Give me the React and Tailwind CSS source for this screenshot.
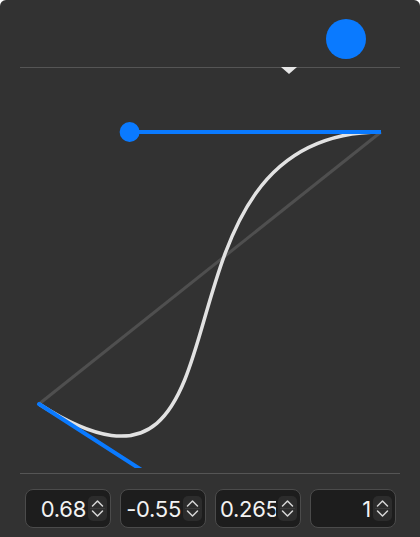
import React from 'react';

const values = ['0.68', '-0.55', '0.265', '1'];

const Stepper = () => (
    <div className="flex h-[25px] w-[19px] shrink-0 flex-col items-center justify-center rounded-[5px] bg-[#2c2c2c]">
        <svg width="19" height="25" viewBox="0 0 19 25" fill="none">
            <path d="M4.5 10 L9.5 5 L14.5 10" stroke="#d6d6d6" strokeWidth="1.5" strokeLinecap="round" strokeLinejoin="round" />
            <line x1="2" y1="12.5" x2="17" y2="12.5" stroke="#3a3a3a" strokeWidth="1" />
            <path d="M4.5 15 L9.5 20 L14.5 15" stroke="#d6d6d6" strokeWidth="1.5" strokeLinecap="round" strokeLinejoin="round" />
        </svg>
    </div>
);

const NumberField = ({ value }) => (
    <div className="flex h-[39px] w-[86px] items-center gap-[2px] rounded-[8px] border border-[#4b4b4b] bg-[#1d1d1d] pl-[4px] pr-[3px]">
        <div className="flex-1 overflow-hidden whitespace-nowrap text-right text-[22px] leading-[28px] tracking-[-0.3px] text-[#f2f2f2]">
            {value}
        </div>
        <Stepper />
    </div>
);

const App = () => {
    // cubic-bezier(0.68, -0.55, 0.265, 1) mapped onto the canvas
    const p0 = [39, 404];
    const p3 = [381, 132];
    const w = p3[0] - p0[0];
    const h = p0[1] - p3[1];
    const p1 = [p0[0] + 0.68 * w, p0[1] + 0.55 * h];
    const p2 = [p0[0] + 0.265 * w, p0[1] - 1 * h];

    return (
        <div className="flex h-[537px] w-[420px] flex-col overflow-hidden rounded-t-[6px] bg-[#323232]" style={{ fontFamily: 'Inter, "Liberation Sans", sans-serif' }}>
            {/* Preview dot */}
            <div className="flex h-[67px] justify-end pr-[54px] pt-[19px]">
                <div className="h-[40px] w-[40px] rounded-full bg-[#0a7aff]" />
            </div>

            {/* Timeline divider */}
            <div className="relative mx-5 h-px bg-[#555555]">
                <div className="absolute left-[261px] top-0 h-0 w-0 border-x-[8px] border-t-[7px] border-x-transparent border-t-[#e6e6e6]" />
            </div>

            {/* Curve editor */}
            <svg width="420" height="400" viewBox="0 68 420 400" className="block">
                <line x1={p0[0]} y1={p0[1]} x2={p3[0]} y2={p3[1]} stroke="#4f4f4f" strokeWidth="3" />
                <path
                    d={`M${p0[0]} ${p0[1]} C${p1[0]} ${p1[1]} ${p2[0]} ${p2[1]} ${p3[0]} ${p3[1]}`}
                    stroke="#e2e2e2"
                    strokeWidth="3.5"
                    fill="none"
                />
                <line x1={p0[0]} y1={p0[1]} x2={p1[0]} y2={p1[1]} stroke="#0a7aff" strokeWidth="4" strokeLinecap="round" />
                <line x1={p3[0]} y1={p3[1]} x2={p2[0]} y2={p2[1]} stroke="#0a7aff" strokeWidth="4" />
                <circle cx={p2[0]} cy={p2[1]} r="10" fill="#0a7aff" />
            </svg>

            <div className="mx-5 mt-[5px] h-px bg-[#555555]" />

            {/* Value fields */}
            <div className="mt-[15px] flex gap-[9px] pl-[25px]">
                {values.map((v) => (
                    <NumberField key={v} value={v} />
                ))}
            </div>
        </div>
    );
};

export default App;
